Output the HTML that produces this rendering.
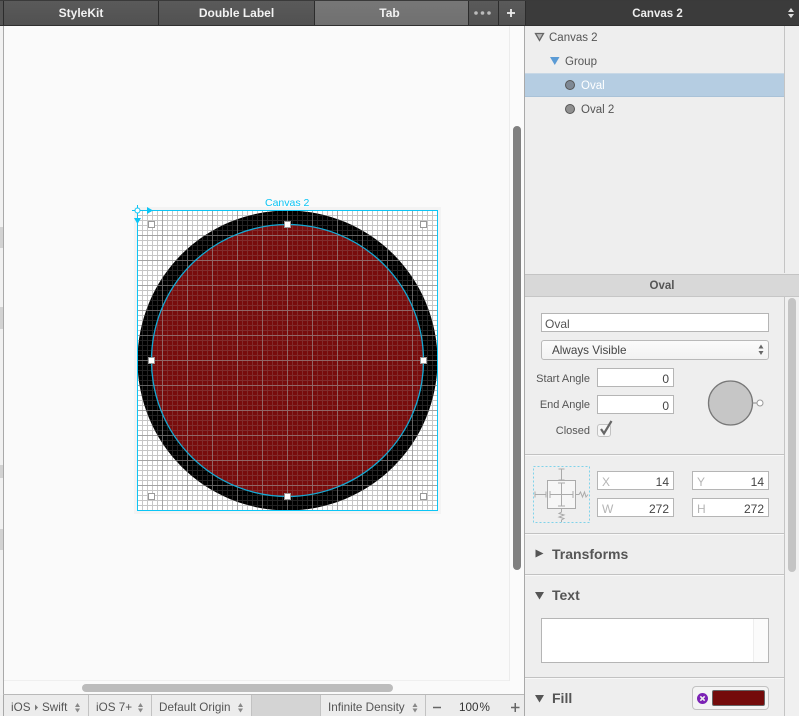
<!DOCTYPE html>
<html><head><meta charset="utf-8"><style>
html,body{margin:0;padding:0;width:799px;height:716px;overflow:hidden;background:#eee}
body{position:relative;font-family:"Liberation Sans",sans-serif;color:#444}
.a{position:absolute;box-sizing:border-box}
.t{position:absolute;white-space:nowrap;line-height:16px}
.tab{position:absolute;top:1px;height:24px;background:linear-gradient(#5a5a5a,#515151);color:#f2f2f2;font-size:12px;font-weight:bold;text-align:center;line-height:24px;border-left:1px solid #2c2c2c;box-sizing:border-box}
.f{position:absolute;background:#fff;border:1px solid #b5b5b5;box-sizing:border-box;height:19px;font-size:12px;line-height:20px;text-align:right;padding-right:4px;color:#444}
.f b{position:absolute;left:4px;top:0;font-weight:normal;color:#b5b5b5;font-size:12px}
.h{position:absolute;height:1px;background:#c2c2c2;left:525px;width:259px;box-shadow:0 1px #f8f8f8}
.lbl{position:absolute;font-size:11px;line-height:16px;text-align:right;white-space:nowrap;color:#555}
.sec{position:absolute;left:552px;font-size:14px;font-weight:bold;color:#555;line-height:18px}
.bt{position:absolute;top:699px;font-size:11.7px;line-height:17px;color:#555;white-space:nowrap}
.bs{position:absolute;top:695px;width:1px;height:21px;background:#c2c2c2}
</style></head><body>
<div class="a" style="left:0;top:0;width:799px;height:1px;background:#3a3a3a"></div>
<div class="a" style="left:0;top:1px;width:4px;height:24px;background:#555"></div>
<div class="tab" style="left:3px;width:155px">StyleKit</div>
<div class="tab" style="left:158px;width:156px">Double Label</div>
<div class="tab" style="left:314px;width:154px;background:linear-gradient(#777,#707070);padding-right:4px">Tab</div>
<div class="tab" style="left:468px;width:30px"><svg width="28" height="24" style="display:block"><g fill="#bbb"><circle cx="7" cy="12" r="1.800"/><circle cx="13.500" cy="12" r="1.800"/><circle cx="20" cy="12" r="1.800"/></g></svg></div>
<div class="tab" style="left:498px;width:27px"><svg width="25" height="24" style="display:block"><path d="M8 12H16M12 8V16" stroke="#eee" stroke-width="1.800"/></svg></div>
<div class="a" style="left:0;top:25px;width:799px;height:1px;background:#2f2f2f"></div>
<div class="a" style="left:525px;top:1px;width:274px;height:24px;background:#3b3b3b;border-left:1px solid #2c2c2c"></div>
<div class="t" style="left:525px;width:265px;top:6px;text-align:center;color:#eee;font-size:11.500px;font-weight:bold">Canvas 2</div>
<svg class="a" style="left:784px;top:6px" width="14" height="14"><path d="M7 2L10 6H4ZM7 12L10 8H4Z" fill="#ddd"/></svg>

<!-- left strip -->
<div class="a" style="left:0;top:26px;width:3px;height:669px;background:#f1f1f1"></div>
<div class="a" style="left:3px;top:26px;width:1px;height:669px;background:#a9a9a9"></div>
<div class="a" style="left:0;top:227px;width:3px;height:21px;background:#d2d2d2"></div>
<div class="a" style="left:0;top:307px;width:3px;height:22px;background:#d2d2d2"></div>
<div class="a" style="left:0;top:465px;width:3px;height:13px;background:#d2d2d2"></div>
<div class="a" style="left:0;top:529px;width:3px;height:21px;background:#d2d2d2"></div>

<!-- canvas area -->
<div class="a" style="left:4px;top:26px;width:520px;height:669px;background:#fafafa"></div>
<div class="a" style="left:4px;top:680px;width:505px;height:1px;background:#efefef"></div>
<div class="a" style="left:509px;top:26px;width:1px;height:655px;background:#ececec"></div>
<div class="a" style="left:510px;top:26px;width:14px;height:669px;background:#fbfbfb"></div>
<div class="a" style="left:513px;top:126px;width:8px;height:444px;background:#808080;border-radius:4px"></div>
<div class="a" style="left:82px;top:684px;width:311px;height:8px;background:#bcbcbc;border-radius:4px"></div>
<div class="a" style="left:524px;top:26px;width:1px;height:690px;background:#a9a9a9"></div>

<svg class="a" style="left:0;top:0" width="524" height="695" viewBox="0 0 524 695">
<defs>
<pattern id="w1" x="137" y="210" width="5" height="5" patternUnits="userSpaceOnUse"><path d="M.5 0V5M0 .5H5" stroke="#c6c6c6" fill="none"/></pattern>
<pattern id="w2" x="137" y="210" width="25" height="25" patternUnits="userSpaceOnUse"><path d="M.5 0V25M0 .5H25" stroke="#a4a4a4" fill="none"/></pattern>
<pattern id="g1" x="137" y="210" width="5" height="5" patternUnits="userSpaceOnUse"><path d="M.5 0V5M0 .5H5" stroke="#a0a0a0" stroke-opacity=".22" fill="none"/></pattern>
<pattern id="g2" x="137" y="210" width="25" height="25" patternUnits="userSpaceOnUse"><path d="M.5 0V25M0 .5H25" stroke="#a0a0a0" stroke-opacity=".5" fill="none"/></pattern>
</defs>
<rect x="134" y="207" width="307" height="307" fill="#f3f3f3"/>
<rect x="137" y="210" width="301" height="301" fill="#fff"/>
<rect x="137" y="210" width="301" height="301" fill="url(#w1)"/>
<rect x="137" y="210" width="301" height="301" fill="url(#w2)"/>
<circle cx="287.500" cy="360.500" r="150" fill="#000"/>
<circle cx="287.500" cy="360.500" r="136" fill="#780c0c"/>
<circle cx="287.500" cy="360.500" r="150" fill="url(#g1)"/>
<circle cx="287.500" cy="360.500" r="150" fill="url(#g2)"/>
<circle cx="287.500" cy="360.500" r="136" fill="none" stroke="#16a8d2" stroke-width="1.300"/>
<rect x="137.500" y="210.500" width="300" height="300" fill="none" stroke="#0cc5f5" stroke-width="1"/>
<g fill="#fff" stroke="#999" stroke-width="1">
<rect x="148.500" y="221.500" width="6" height="6"/><rect x="420.500" y="221.500" width="6" height="6"/>
<rect x="148.500" y="493.500" width="6" height="6"/><rect x="420.500" y="493.500" width="6" height="6"/>
<rect x="284.500" y="221.500" width="6" height="6"/><rect x="148.500" y="357.500" width="6" height="6"/>
<rect x="420.500" y="357.500" width="6" height="6"/><rect x="284.500" y="493.500" width="6" height="6"/></g>
<g fill="#0cc5f5"><path d="M147 207L153 210.500L147 214Z"/><path d="M134 218H141L137.500 224Z"/></g>
<path d="M137.500 205V216M132 210.500H143" stroke="#0cc5f5" stroke-width="1"/>
<circle cx="137.500" cy="210.500" r="2.500" fill="#fff" stroke="#0cc5f5"/>
<text x="265" y="206" font-family="Liberation Sans" font-size="10.500" fill="#0cc5f5">Canvas 2</text>
</svg>

<!-- bottom bar -->
<div class="a" style="left:3px;top:694px;width:521px;height:1px;background:#b9b9b9"></div>
<div class="a" style="left:3px;top:695px;width:521px;height:21px;background:#ececec"></div>
<div class="a" style="left:252px;top:695px;width:68px;height:21px;background:#d4d4d4"></div>
<div class="a" style="left:3px;top:695px;width:1px;height:21px;background:#a9a9a9"></div>
<div class="bs" style="left:88px"></div><div class="bs" style="left:151px"></div><div class="bs" style="left:251px"></div><div class="bs" style="left:320px"></div><div class="bs" style="left:425px"></div>
<div class="bt" style="left:11px">iOS</div>
<svg class="a" style="left:34px;top:704px" width="5" height="7"><path d="M1 .5L4 3.500L1 6.500Z" fill="#777"/></svg>
<div class="bt" style="left:42px">Swift</div>
<div class="bt" style="left:96px">iOS 7+</div>
<div class="bt" style="left:159px">Default Origin</div>
<div class="bt" style="left:328px">Infinite Density</div>
<svg class="a" style="left:0;top:695px" width="524" height="21"><g fill="#888"><path d="M77.500 8L80 12H75ZM77.500 17.500L80 13.500H75Z"/><path d="M140.500 8L143 12H138ZM140.500 17.500L143 13.500H138Z"/><path d="M240.500 8L243 12H238ZM240.500 17.500L243 13.500H238Z"/><path d="M415 8L417.500 12H412.500ZM415 17.500L417.500 13.500H412.500Z"/></g><path d="M433 12.500H441M511 12.500H519.500M515.250 8V17" stroke="#666" stroke-width="1.500"/></svg>
<div class="bt" style="left:459px;color:#333">100<span style="margin-left:1px">%</span></div>

<!-- tree -->
<div class="a" style="left:525px;top:26px;width:259px;height:247px;background:#eee"></div>
<div class="a" style="left:784px;top:26px;width:1px;height:247px;background:#c4c4c4"></div>
<div class="a" style="left:525px;top:73px;width:259px;height:24px;background:#b5cde2;border-top:1px solid #c8d8e6;border-bottom:1px solid #a9c2d8"></div>
<svg class="a" style="left:530px;top:26px" width="60" height="95">
<path d="M5.500 7.500H13.500L9.500 14.500Z" fill="#bbb" stroke="#666" stroke-width="1.300"/>
<path d="M20 31H29.500L24.750 39Z" fill="#5b9bd5"/>
<circle cx="40" cy="59" r="4.500" fill="#7e8894" stroke="#555"/>
<circle cx="40" cy="83" r="4.500" fill="#909090" stroke="#555"/>
</svg>
<div class="t" style="left:549px;top:30px;font-size:11.500px;color:#555">Canvas 2</div>
<div class="t" style="left:565px;top:54px;font-size:11.500px;color:#555">Group</div>
<div class="t" style="left:581px;top:78px;font-size:11.500px;color:#fff">Oval</div>
<div class="t" style="left:581px;top:102px;font-size:11.500px;color:#555">Oval 2</div>

<!-- inspector -->
<div class="a" style="left:525px;top:274px;width:274px;height:23px;background:#d8d8d8;border-top:1px solid #c4c4c4;border-bottom:1px solid #c6c6c6"></div>
<div class="t" style="left:525px;width:274px;top:278px;text-align:center;font-size:11.500px;font-weight:bold;color:#555">Oval</div>
<div class="a" style="left:784px;top:297px;width:1px;height:419px;background:#c4c4c4"></div>
<div class="a" style="left:785px;top:297px;width:14px;height:419px;background:#f0f0f0"></div>
<div class="a" style="left:788px;top:298px;width:8px;height:274px;background:#c4c4c4;border-radius:4px"></div>

<div class="f" style="left:541px;top:313px;width:228px;text-align:left;padding-left:3px;color:#555">Oval</div>
<div class="a" style="left:541px;top:340px;width:228px;height:20px;background:linear-gradient(#fbfbfb,#f2f2f2);border:1px solid #b9b9b9;border-radius:3px"></div>
<div class="t" style="left:552px;top:343px;font-size:11.700px;color:#444">Always Visible</div>
<svg class="a" style="left:755px;top:342px" width="12" height="16"><path d="M6 2.500L8.500 6.500H3.500ZM6 13L8.500 9H3.500Z" fill="#666"/></svg>

<div class="lbl" style="left:525px;width:65px;top:371px">Start Angle</div>
<div class="f" style="left:597px;top:368px;width:77px">0</div>
<div class="lbl" style="left:525px;width:65px;top:397px">End Angle</div>
<div class="f" style="left:597px;top:395px;width:77px">0</div>
<div class="lbl" style="left:525px;width:65px;top:423px">Closed</div>
<div class="a" style="left:597px;top:424px;width:14px;height:13px;background:#f6f6f6;border:1px solid #c2c2c2;border-radius:3px"></div>
<svg class="a" style="left:596px;top:418px" width="18" height="20"><path d="M5 11L8 15.500L15.500 3" fill="none" stroke="#666" stroke-width="2.200"/></svg>
<svg class="a" style="left:705px;top:378px" width="62" height="50">
<circle cx="25.500" cy="25" r="22" fill="#c6c6c6" stroke="#777" stroke-width="1.300"/>
<path d="M47.500 25H52" stroke="#888"/><circle cx="55" cy="25" r="3" fill="#fff" stroke="#999"/>
</svg>

<div class="h" style="top:454px"></div>
<svg class="a" style="left:533px;top:466px" width="58" height="58">
<rect x=".5" y=".5" width="56" height="56" fill="none" stroke="#7fd3ea" stroke-dasharray="2 2"/>
<rect x="14.500" y="14.500" width="28" height="28" fill="#f6f6f6" stroke="#aaa"/>
<path d="M28.500 3V14M25.500 3H31.500M25.500 14H31.500M28.500 17V40M25 17H32M25 40H32M17 28.500H40M17 25V32M40 25V32M2 28.500H13M2 25.500V31.500M13 25.500V31.500" fill="none" stroke="#aaa"/>
<path d="M43 28.500H46L47.500 26L49.500 31L51.500 26L53 31L55 28.500" fill="none" stroke="#aaa"/>
<path d="M28.500 43V46L26 47.500L31 49L26 51L31 52.500L28.500 54V56" fill="none" stroke="#aaa"/>
</svg>
<div class="f" style="left:597px;top:471px;width:77px"><b>X</b>14</div>
<div class="f" style="left:692px;top:471px;width:77px"><b>Y</b>14</div>
<div class="f" style="left:597px;top:498px;width:77px"><b>W</b>272</div>
<div class="f" style="left:692px;top:498px;width:77px"><b>H</b>272</div>

<div class="h" style="top:533px"></div>
<svg class="a" style="left:535px;top:549px" width="10" height="10"><path d="M0.500 0.500L8.500 4.500L0.500 8.500Z" fill="#555"/></svg>
<div class="sec" style="top:545px">Transforms</div>
<div class="h" style="top:574px"></div>
<svg class="a" style="left:534px;top:591px" width="11" height="10"><path d="M1 1H10L5.500 8.500Z" fill="#555"/></svg>
<div class="sec" style="top:586px">Text</div>
<div class="a" style="left:541px;top:618px;width:228px;height:45px;background:#fff;border:1px solid #b5b5b5"></div>
<div class="a" style="left:753px;top:619px;width:15px;height:43px;background:#fbfbfb;border-left:1px solid #eee"></div>
<div class="h" style="top:677px"></div>
<svg class="a" style="left:534px;top:694px" width="11" height="10"><path d="M1 1H10L5.500 8.500Z" fill="#555"/></svg>
<div class="sec" style="top:689px">Fill</div>
<div class="a" style="left:692px;top:686px;width:77px;height:24px;background:#f4f4f4;border:1px solid #c2c2c2;border-radius:4px"></div>
<div class="a" style="left:712px;top:690px;width:53px;height:16px;background:#740b0b;border:1px solid #666;border-radius:2px"></div>
<svg class="a" style="left:696px;top:692px" width="13" height="13"><circle cx="6.500" cy="6.500" r="5.500" fill="#7b22b5"/><path d="M4.300 4.300L8.700 8.700M8.700 4.300L4.300 8.700" stroke="#eee" stroke-width="1.600"/></svg>
</body></html>
